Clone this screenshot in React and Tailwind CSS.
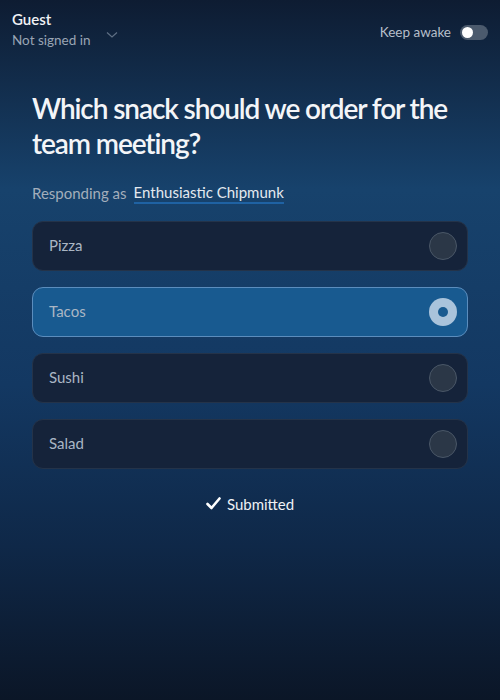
import React, { useState } from 'react';

const options = ['Pizza', 'Tacos', 'Sushi', 'Salad'];

function Option({ label, selected, onClick }) {
  return (
    <button
      type="button"
      onClick={onClick}
      className={
        selected
          ? 'flex items-center justify-between w-full h-[50px] pl-4 pr-[10px] rounded-[11px] border border-[#5b8dbd] bg-[#185a90] text-left'
          : 'flex items-center justify-between w-full h-[50px] pl-4 pr-[10px] rounded-[11px] border border-[#243349] bg-[#15233a] text-left'
      }
    >
      <span className="text-[15px] text-[#aab6c4]">{label}</span>
      {selected ? (
        <span className="w-[28px] h-[28px] rounded-full bg-[#a9c3db] flex items-center justify-center">
          <span className="w-[10px] h-[10px] rounded-full bg-[#185a90]"></span>
        </span>
      ) : (
        <span className="w-[28px] h-[28px] rounded-full bg-[#2b3747] border border-[#4a5767]"></span>
      )}
    </button>
  );
}

export default function App() {
  const [choice, setChoice] = useState('Tacos');
  const [awake, setAwake] = useState(false);

  return (
    <div className="w-[500px] h-[700px] flex flex-col font-['Lato','Noto_Sans',sans-serif] bg-[linear-gradient(180deg,#0e1c32_0%,#17426c_27%,#133862_55%,#0f2848_78%,#0b1627_100%)] text-white">
      {/* header */}
      <div className="flex justify-between items-start px-3 pt-[10px]">
        <div className="flex items-end gap-4">
          <div>
            <div className="text-[15px] font-semibold leading-[19px] text-[#f1f3f6]">Guest</div>
            <div className="text-[13.5px] leading-[22px] text-[#9aa5b4]">Not signed in</div>
          </div>
          <svg width="12" height="8" viewBox="0 0 12 8" className="mb-[12px]">
            <path d="M1 1.5 L6 6 L11 1.5" fill="none" stroke="#5f6f84" strokeWidth="1.2" />
          </svg>
        </div>
        <div className="flex items-center gap-[9px] pt-[12px]">
          <span className="text-[13.5px] text-[#b6bfca]">Keep awake</span>
          <button
            type="button"
            onClick={() => setAwake(!awake)}
            className="w-[28px] h-[15px] rounded-full bg-[#4b5a6d] flex items-center px-[2px]"
          >
            <span className="w-[11px] h-[11px] rounded-full bg-white"></span>
          </button>
        </div>
      </div>

      {/* main */}
      <div className="px-8 pt-[40px]">
        <h1 className="text-[28px] font-semibold leading-[35px] tracking-[-1.1px] text-[#f3f5f8]">
          Which snack should we order for the team meeting?
        </h1>
        <div className="mt-[21px] flex items-center gap-[7px] text-[15px]">
          <span className="text-[#a3aebb]">Responding as</span>
          <span className="text-[#e4e9ef] border-b-2 border-[#1f62a3] leading-[20px]">Enthusiastic Chipmunk</span>
        </div>

        <div className="mt-[16px] flex flex-col gap-[16px]">
          {options.map((o) => (
            <Option key={o} label={o} selected={choice === o} onClick={() => setChoice(o)} />
          ))}
        </div>

        <div className="mt-[24px] flex items-center justify-center gap-[6px] text-[15px] text-[#eef1f5]">
          <svg width="15" height="13" viewBox="0 0 15 13">
            <path d="M1.5 7 L5.5 11 L13.5 1.5" fill="none" stroke="#ffffff" strokeWidth="2.6" strokeLinecap="round" strokeLinejoin="round" />
          </svg>
          <span>Submitted</span>
        </div>
      </div>
    </div>
  );
}
